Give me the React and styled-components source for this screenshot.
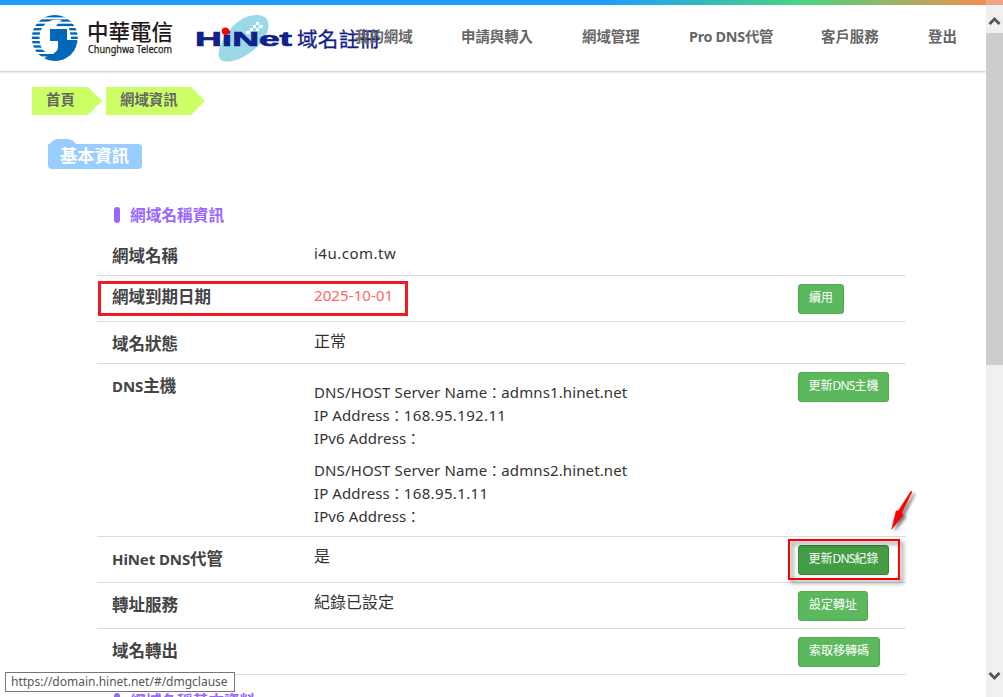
import React from "react";
import styled, { createGlobalStyle } from "styled-components";

const Global = createGlobalStyle`
  * { box-sizing: border-box; }
  html, body { margin: 0; height: 100%; overflow: hidden; background: #fff; }
  body { font-family: "Noto Sans", "Noto Sans CJK TC", sans-serif; color: #333; }
`;

const Window = styled.div`
  position: relative;
  display: grid;
  grid-template-columns: 986px 17px;
  width: 1003px;
  height: 697px;
  overflow: hidden;
`;

const Viewport = styled.div`
  height: 697px;
  overflow: hidden;
`;

const Header = styled.header`
  display: flex;
  height: 71px;
  box-shadow: 0 1px 2px rgba(0, 0, 0, 0.25);
`;

const Rainbow = styled.div`
  position: absolute;
  top: 0;
  left: 0;
  width: 1003px;
  height: 5px;
  background: linear-gradient(90deg, #209cff 0, #209cff 605px, #45d67f 800px, #f68d4c 990px);
`;

const Logos = styled.div`
  flex: none;
  width: 355px;
  height: 71px;
`;

const Nav = styled.nav`
  display: flex;
  align-items: flex-start;
  padding-top: 27px;
`;

const NavItem = styled.a`
  flex: none;
  width: ${(p) => p.$w}px;
  font-size: 14.4px;
  line-height: 20px;
  font-weight: 700;
  color: #666;
  white-space: nowrap;
  letter-spacing: ${(p) => p.$ls || 0}px;
`;

const Crumbs = styled.div`
  display: flex;
  gap: 4px;
  padding: 16px 0 0 32px;
`;

const Crumb = styled.a`
  width: ${(p) => p.$w}px;
  height: 28px;
  padding-left: 14px;
  background: #cf6;
  clip-path: polygon(0 0, calc(100% - 14px) 0, 100% 50%, calc(100% - 14px) 100%, 0 100%);
  font-size: 14.4px;
  line-height: 26px;
  font-weight: 700;
  color: #666;
`;

const Folder = styled.div`
  width: 94px;
  margin: 24px 0 0 48px;
  &::before {
    content: "";
    display: block;
    width: 30px;
    height: 12px;
    margin-bottom: -7px;
    background: #9cf;
    border-radius: 11px 11px 0 0;
  }
`;

const FolderTitle = styled.h2`
  margin: 0;
  height: 25px;
  padding-left: 12px;
  background: #9cf;
  border-radius: 0 4px 4px 4px;
  color: #fff;
  font-size: 17.3px;
  font-weight: 700;
  line-height: 23px;
`;

const SectionTitle = styled.h3`
  display: flex;
  align-items: center;
  gap: 10px;
  height: 22px;
  margin: ${(p) => p.$mt}px 0 0 114px;
  color: #96f;
  font-size: 15.7px;
  font-weight: 700;
  line-height: 22px;
  &::before {
    content: "";
    width: 6px;
    height: 16px;
    border-radius: 3px;
    background: #96f;
  }
`;

const Table = styled.div`
  width: 809px;
  margin: 9px 0 0 97px;
`;

const Row = styled.div`
  display: grid;
  grid-template-columns: 202px 484px 1fr;
  align-items: start;
  height: ${(p) => p.$h}px;
  padding: 8px 0 0 15px;
  border-bottom: 1px solid #ddd;
`;

const Label = styled.div`
  font-size: 16.5px;
  font-weight: 700;
  line-height: 24px;
  margin-top: ${(p) => p.$mt || 0}px;
  color: #444;
  span { font-size: 15px; letter-spacing: -0.1px; }
`;

const Value = styled.div`
  font-size: 16px;
  line-height: 22px;
  margin-top: ${(p) => p.$mt || 0}px;
  color: ${(p) => (p.$alert ? "#f66" : "#333")};
  white-space: nowrap;
`;

const Latin = styled.span`
  font-size: 15px;
  letter-spacing: ${(p) => p.$ls || 0}px;
`;

const Server = styled.p`
  margin: 0 0 10px;
  font-size: 15px;
  line-height: 22.8px;
`;

const Colon = styled.span`
  font-size: 14px;
  line-height: 0;
  letter-spacing: 0;
`;

const Button = styled.button`
  display: block;
  width: ${(p) => p.$w}px;
  height: 30px;
  padding: 0 0 3px;
  border: 1px solid ${(p) => (p.$active ? "#398439" : "#4cae4c")};
  border-radius: 3px;
  background: ${(p) => (p.$active ? "#449d44" : "#5cb85c")};
  color: #fff;
  font-family: inherit;
  font-size: 12px;
  line-height: 18px;
  white-space: nowrap;
  span { letter-spacing: -0.8px; }
`;

const Actions = styled.div`
  display: flex;
  gap: 16px;
  margin: -5px 0 0 622px;
`;

const Scrollbar = styled.div`
  display: flex;
  flex-direction: column;
  justify-content: space-between;
  height: 697px;
  background: #f0f0f0;
`;

const Thumb = styled.div`
  height: 332px;
  margin-bottom: auto;
  background: #cdcdcd;
`;

const RainbowVeil = styled.div`
  position: absolute;
  top: 0;
  left: 986px;
  width: 17px;
  height: 5px;
  background: #efa486;
`;

const StatusBar = styled.div`
  position: absolute;
  left: 5px;
  top: 672px;
  width: 230px;
  height: 20px;
  padding-left: 5px;
  border: 1px solid #767676;
  background: #fff;
  color: #575757;
  font-size: 12px;
  line-height: 18px;
  white-space: nowrap;
`;

const Highlight = styled.div`
  position: absolute;
  left: ${(p) => p.$x}px;
  top: ${(p) => p.$y}px;
  width: ${(p) => p.$w}px;
  height: ${(p) => p.$h}px;
  border: ${(p) => p.$b}px solid ${(p) => p.$color};
  ${(p) => p.$shadow && "filter: drop-shadow(3px 3px 2px rgba(0,0,0,.55));"}
`;

const Arrow = styled.svg`
  position: absolute;
  left: 884px;
  top: 484px;
  filter: drop-shadow(3px 2px 1.5px rgba(0, 0, 0, 0.5));
`;

function Brand() {
  return (
    <svg width="400" height="71" viewBox="0 0 400 71">
      <defs>
        <clipPath id="globe"><circle cx="54.8" cy="38" r="23" /></clipPath>
      </defs>
      <g clipPath="url(#globe)">
        <g fill="#0068b7">
          {[15, 19.3, 23.7, 28, 32.3, 36.6, 41, 45.3, 49.6, 54, 58.2].map((y) => (
            <rect key={y} x="31" y={y} width="48" height="2.4" />
          ))}
        </g>
        <path d="M62 20C49 17 40 26 39.500 37C39 47 44 54 52 54L60 51V48L70 47L71 38L69 28L55 28C57 24 59 22 62 20Z" fill="#fff" />
        <path d="M50 29H67V40H77.500C76 54 68 61 55 61C51 61 48 60 45 57C52 55 58 52 58 47V41H50Z" fill="#0068b7" />
      </g>
      <g fill="#231815">
        <text x="87" y="40" fontSize="21.5" fontWeight="500" textLength="86" fontFamily="Noto Sans CJK TC">中華電信</text>
        <text x="88" y="53" fontSize="10.5" textLength="84" lengthAdjust="spacingAndGlyphs" fontFamily="Noto Sans" stroke="#231815" strokeWidth=".25">Chunghwa Telecom</text>
      </g>
      <path d="M219 57C217 46 228 29 239 21C250 13 266 13 268 22C271 32 261 46 248 54C235 63 221 64 219 57Z" fill="#9bd9e8" />
      <path d="M256 22h3v3h-3zM253 25h3v3h-3zM259 25h4v3h-4zM256 28h3v3h-3zM250 28h3v3h-3zM246 31h4v3h-4z" fill="#fff" />
      <text x="195" y="46" fontSize="20.5" fontWeight="700" textLength="97" lengthAdjust="spacingAndGlyphs" fontFamily="Liberation Sans" fill="#10218b" stroke="#10218b" strokeWidth=".7">HiNet</text>
      <circle cx="225.5" cy="31.3" r="3.7" fill="#f00" />
      <text x="297" y="47" fontSize="20.5" fontWeight="400" textLength="83" fontFamily="Noto Sans CJK TC" fill="#10218b" stroke="#10218b" strokeWidth=".3">域名註冊</text>
    </svg>
  );
}

function Chevron({ down }) {
  return (
    <svg width="17" height="33" viewBox="0 0 17 33">
      <path d={down ? "M3.5 9L8.5 14L13.5 9" : "M3.5 24L8.5 19L13.5 24"} fill="none" stroke="#555" strokeWidth="2.8" />
    </svg>
  );
}

function Host({ name, ip }) {
  return (
    <Server>
      <Latin $ls={0.12}>DNS/HOST Server Name<Colon>{"\uFF1A"}</Colon>{name}</Latin><br />
      <Latin $ls={0.1}>IP Address<Colon>{"\uFF1A"}</Colon><Latin $ls={0.35}>{ip}</Latin></Latin><br />
      <Latin $ls={0.1}>IPv6 Address<Colon>{"\uFF1A"}</Colon></Latin>
    </Server>
  );
}

export default function App() {
  return (
    <>
      <Global />
      <Window>
        <Viewport>
          <Header>
            <Logos><Brand /></Logos>
            <Nav>
              <NavItem $w={106}>我的網域</NavItem>
              <NavItem $w={121}>申請與轉入</NavItem>
              <NavItem $w={107}>網域管理</NavItem>
              <NavItem $w={132} $ls={-0.3}>Pro DNS代管</NavItem>
              <NavItem $w={107}>客戶服務</NavItem>
              <NavItem $w={58}>登出</NavItem>
            </Nav>
          </Header>
          <Crumbs>
            <Crumb $w={70}>首頁</Crumb>
            <Crumb $w={99}>網域資訊</Crumb>
          </Crumbs>
          <Folder><FolderTitle>基本資訊</FolderTitle></Folder>
          <SectionTitle $mt={35}>網域名稱資訊</SectionTitle>
          <Table>
            <Row $h={41}><Label $mt={1}>網域名稱</Label><Value $mt={-1}><Latin $ls={0.5}>i4u.com.tw</Latin></Value></Row>
            <Row $h={46}><Label $mt={1}>網域到期日期</Label><Value $alert><Latin $ls={0.1}>2025-10-01</Latin></Value><Button $w={46}>續用</Button></Row>
            <Row $h={42}><Label $mt={2}>域名狀態</Label><Value>正常</Value></Row>
            <Row $h={173}>
              <Label $mt={2}><span>DNS</span>主機</Label>
              <Value $mt={9}>
                <Host name="admns1.hinet.net" ip="168.95.192.11" />
                <Host name="admns2.hinet.net" ip="168.95.1.11" />
              </Value>
              <Button $w={91}>更新<span>DNS</span>主機</Button>
            </Row>
            <Row $h={46}><Label $mt={2}><span>HiNet DNS</span>代管</Label><Value>是</Value><Button $w={91} $active>更新<span>DNS</span>紀錄</Button></Row>
            <Row $h={46}><Label $mt={2}>轉址服務</Label><Value>紀錄已設定</Value><Button $w={70}>設定轉址</Button></Row>
            <Row $h={46}><Label $mt={2}>域名轉出</Label><span /><Button $w={82}>索取移轉碼</Button></Row>
          </Table>
          <SectionTitle $mt={15}>網域名稱基本資料</SectionTitle>
          <Actions><Button $w={82} /><Button $w={94} /></Actions>
        </Viewport>
        <Scrollbar>
          <Chevron />
          <Thumb />
          <Chevron down />
        </Scrollbar>
        <Rainbow />
        <RainbowVeil />
        <Highlight $x={98} $y={281} $w={310} $h={35} $b={3} $color="#ed1c24" />
        <Highlight $x={788} $y={539} $w={112} $h={41} $b={2} $color="#f00" $shadow />
        <Arrow width="40" height="52" viewBox="0 0 40 52">
          <path d="M27 7L28 8L18 28.500L19 31.500L7.500 45.500L12 27L14.500 26.500Z" fill="#f00" stroke="#f00" strokeWidth=".4" />
        </Arrow>
        <StatusBar>https://domain.hinet.net/#/dmgclause</StatusBar>
      </Window>
    </>
  );
}
